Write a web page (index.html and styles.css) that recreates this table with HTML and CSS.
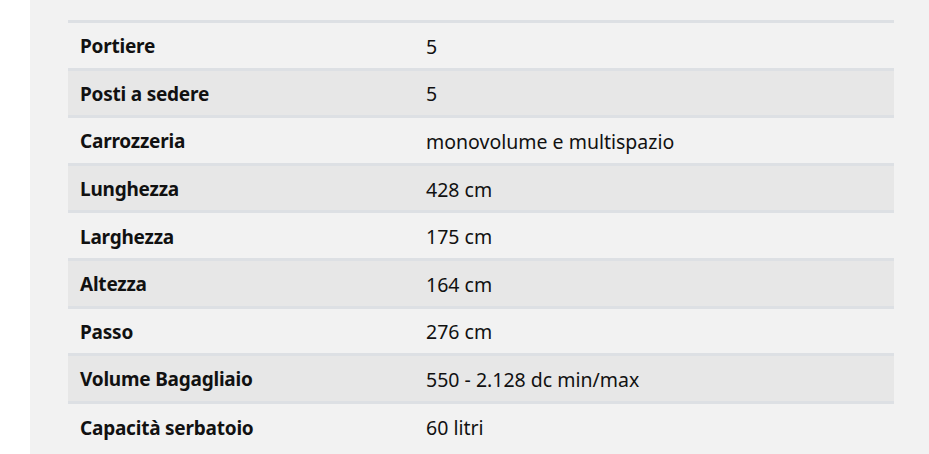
FILE: index.html
```html
<!DOCTYPE html>
<html lang="it">
<head>
<meta charset="utf-8">
<title>Dati tecnici</title>
<link rel="stylesheet" href="styles.css">
</head>
<body>
<div class="page">
  <div class="panel">
    <table class="specs">
      <tbody>
        <tr><th>Portiere</th><td>5</td></tr>
        <tr><th>Posti a sedere</th><td>5</td></tr>
        <tr><th>Carrozzeria</th><td>monovolume e multispazio</td></tr>
        <tr><th>Lunghezza</th><td>428 cm</td></tr>
        <tr><th>Larghezza</th><td>175 cm</td></tr>
        <tr><th>Altezza</th><td>164 cm</td></tr>
        <tr><th>Passo</th><td>276 cm</td></tr>
        <tr><th>Volume Bagagliaio</th><td>550 - 2.128 dc min/max</td></tr>
        <tr><th>Capacità serbatoio</th><td>60 litri</td></tr>
      </tbody>
    </table>
  </div>
</div>
</body>
</html>
```
FILE: styles.css
```css
html, body {
  margin: 0;
  padding: 0;
  background: #ffffff;
}
.page {
  padding-left: 30px;
  height: 454px;
  overflow: hidden;
}
.panel {
  background: #f2f2f2;
  padding: 20px 35px 20px 38px;
  min-height: 454px;
  box-sizing: border-box;
}
.specs {
  width: 826px;
  border-collapse: collapse;
  font-family: "Noto Sans", "Open Sans", sans-serif;
  color: #111111;
}
.specs tr {
  border-top: 3px solid #dde0e4;
}
.specs tr:nth-child(even) {
  background: #e7e7e7;
}
.specs th,
.specs td {
  height: 47.6px;
  padding: 2px 12px 0;
  text-align: left;
  vertical-align: middle;
  box-sizing: border-box;
}
.specs th {
  width: 346px;
  font-size: 19px;
  font-weight: 700;
  letter-spacing: -0.22px;
}
.specs td {
  font-size: 19.5px;
  font-weight: 400;
}
```
